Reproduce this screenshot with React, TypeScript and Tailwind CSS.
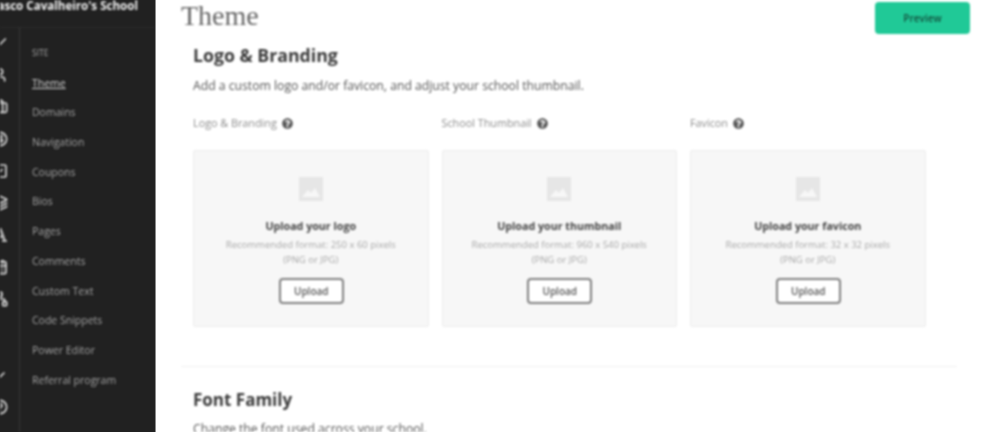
import React from "react";
import { FaQuestionCircle, FaFont } from "react-icons/fa";
import {
  Check,
  User,
  Briefcase,
  CircleDollarSign,
  SquareCheck,
  Layers,
  CalendarDays,
  Network,
  ChevronDown,
  CircleHelp,
} from "lucide-react";

const navItems = [
  "SITE",
  "Theme",
  "Domains",
  "Navigation",
  "Coupons",
  "Bios",
  "Pages",
  "Comments",
  "Custom Text",
  "Code Snippets",
  "Power Editor",
  "Referral program",
];

const uploads = [
  { label: "Logo & Branding", title: "Upload your logo", format: "Recommended format: 250 x 60 pixels" },
  { label: "School Thumbnail", title: "Upload your thumbnail", format: "Recommended format: 960 x 540 pixels" },
  { label: "Favicon", title: "Upload your favicon", format: "Recommended format: 32 x 32 pixels" },
];

const ImagePlaceholder = () => (
  <svg width="24" height="24" viewBox="0 0 24 24">
    <rect width="24" height="24" fill="#e6e6e6" />
    <path d="M3 20 L9 13 L12 16 L16 11 L21 20 Z" fill="#f7f7f7" />
  </svg>
);

const Sidebar = () => (
  <aside className="h-[432px] w-[156px] shrink-0 overflow-hidden border-r border-[#8a8a8a] bg-[#212121]">
    <div className="flex h-full flex-col overflow-hidden blur-[0.8px]">
      <div className="flex h-[28px] shrink-0 items-start justify-end overflow-hidden border-b border-[#2e2e2e] pr-[17px]">
        <span className="-mt-[3px] whitespace-nowrap text-[11.6px] font-bold text-[#f0f0f0]">
          Vasco Cavalheiro's School
        </span>
      </div>
      <div className="flex flex-1">
        <div className="flex w-[20px] shrink-0 flex-col items-end gap-[16px] overflow-hidden border-r border-[#3a3a3a] pr-[11px] pt-[7px] text-[#d8d8d8]">
          <Check className="size-[16px] shrink-0" strokeWidth={2.5} />
          <User className="size-[16px] shrink-0" strokeWidth={2.5} />
          <Briefcase className="size-[16px] shrink-0" strokeWidth={2.5} />
          <CircleDollarSign className="size-[16px] shrink-0" strokeWidth={2.5} />
          <SquareCheck className="size-[16px] shrink-0" strokeWidth={2.5} />
          <Layers className="size-[16px] shrink-0" strokeWidth={2.5} />
          <FaFont className="size-[16px] shrink-0 text-[#b8b8b8]" />
          <CalendarDays className="size-[16px] shrink-0" strokeWidth={2.5} />
          <Network className="size-[16px] shrink-0" strokeWidth={2.5} />
          <ChevronDown className="mt-[44px] size-[16px] shrink-0" strokeWidth={2.5} />
          <CircleHelp className="size-[16px] shrink-0" strokeWidth={2.5} />
        </div>
        <nav className="flex flex-col gap-[9.7px] pl-[12px] pt-[15px]">
          {navItems.map((item) => (
            <a
              key={item}
              className={
                item === "Theme"
                  ? "h-[20px] text-[10.5px] leading-[20px] text-[#d4d4d4] underline"
                  : item === "SITE"
                    ? "h-[20px] text-[8.5px] leading-[20px] text-[#a3a3a3]"
                    : "h-[20px] text-[10.5px] leading-[20px] text-[#a3a3a3]"
              }
            >
              {item}
            </a>
          ))}
        </nav>
      </div>
    </div>
  </aside>
);

const UploadCard = ({ label, title, format }: { label: string; title: string; format: string }) => (
  <div className="w-[235.5px]">
    <div className="flex h-[18px] items-center gap-[5px] text-[10.8px] text-[#8c8c8c]">
      {label}
      <FaQuestionCircle className="size-[11px] text-[#555555]" />
    </div>
    <div className="mt-[18px] flex h-[177px] flex-col items-center rounded-[2px] border border-[#ececec] bg-[#f7f7f7] pt-[26px]">
      <ImagePlaceholder />
      <div className="mt-[18px] text-[10.7px] font-bold leading-[14px] text-[#444444]">{title}</div>
      <div className="mt-[4px] text-center text-[9.5px] leading-[15px] text-[#a8a8a8]">
        {format}
        <br />
        (PNG or JPG)
      </div>
      <button className="ml-[1px] mt-[11px] h-[26px] w-[65px] rounded-[4px] border-2 border-[#808080] bg-white text-[10px] font-semibold text-[#555555]">
        Upload
      </button>
    </div>
  </div>
);

export default function App() {
  return (
    <div className="flex h-[432px] w-[1000px] overflow-hidden bg-white [font-family:'Open_Sans',sans-serif]">
      <Sidebar />
      <main className="flex-1 overflow-hidden pl-[25px] pr-[30px] blur-[0.8px]">
        <div className="flex items-start justify-between">
          <h1 className="text-[28px] leading-[31px] text-[#666666] [font-family:'Liberation_Serif',serif]">Theme</h1>
          <button className="mt-[2px] h-[32px] w-[95px] rounded-[4px] bg-[#20c997] text-[10px] font-semibold text-[#14513f]">
            Preview
          </button>
        </div>
        <section className="pl-[12px] pt-[9px]">
          <h2 className="text-[17.7px] font-bold leading-[24px] text-[#3a3a3a]">Logo &amp; Branding</h2>
          <p className="mt-[11px] text-[12.2px] leading-[16px] text-[#555555]">
            Add a custom logo and/or favicon, and adjust your school thumbnail.
          </p>
          <div className="mt-[20px] flex gap-[13px]">
            {uploads.map((u) => (
              <UploadCard key={u.label} {...u} />
            ))}
          </div>
        </section>
        <hr className="mr-[13px] mt-[39px] border-[#f0f0f0]" />
        <section className="pl-[12px] pt-[21px]">
          <h2 className="text-[17px] font-bold leading-[24px] text-[#3a3a3a]">Font Family</h2>
          <p className="mt-[9px] text-[12.2px] leading-[16px] text-[#555555]">Change the font used across your school.</p>
        </section>
      </main>
    </div>
  );
}
